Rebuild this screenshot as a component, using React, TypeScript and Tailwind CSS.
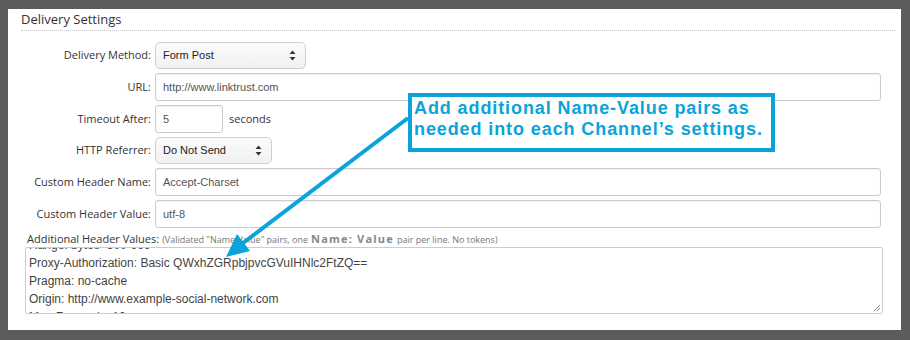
import React from 'react';

const labelFont = { fontFamily: '"Open Sans", "Liberation Sans", sans-serif' };
const inputFont = { fontFamily: '"Liberation Sans", Arial, sans-serif' };

const SelectArrows = () => (
  <svg width="7" height="11" viewBox="0 0 7 11" className="shrink-0">
    <path d="M3.5 0.5 L6.5 4 L0.5 4 Z" fill="#333" />
    <path d="M3.5 10.5 L6.5 7 L0.5 7 Z" fill="#333" />
  </svg>
);

const FakeSelect = ({ value, width }: { value: string; width: string }) => (
  <div
    className={`${width} h-[27px] flex items-center justify-between pl-[7px] pr-[9px] rounded-[5px] border border-[#cfcfcf] bg-gradient-to-b from-[#fbfbfb] to-[#f1f1f1] text-[11px] text-[#222]`}
    style={inputFont}
  >
    <span>{value}</span>
    <SelectArrows />
  </div>
);

const FakeInput = ({ value, width }: { value: string; width: string }) => (
  <div
    className={`${width} h-[28px] flex items-center px-[7px] rounded-[3px] border border-[#cccccc] bg-white shadow-[inset_0_1px_1px_rgba(0,0,0,0.06)] text-[11px] text-[#555]`}
    style={inputFont}
  >
    {value}
  </div>
);

const Row = ({ label, children }: { label: string; children: React.ReactNode }) => (
  <div className="flex items-center">
    <label className="w-[147px] text-right pr-[4px] text-[11px] text-[#333]" style={labelFont}>
      {label}
    </label>
    {children}
  </div>
);

const headerLines = [
  'Range: bytes=500-999',
  'Proxy-Authorization: Basic QWxhZGRpbjpvcGVuIHNlc2FtZQ==',
  'Pragma: no-cache',
  'Origin: http://www.example-social-network.com',
  'Max-Forwards: 10',
];

export default function App() {
  return (
    <div className="relative w-[910px] h-[340px] bg-[#5c5c5c] pt-[9px] pl-[8px] overflow-hidden">
      <div className="w-[893px] h-[321px] bg-white">
        <div className="px-[13px] pt-[1px]">
          <h3 className="text-[13px] leading-[19px] text-[#333] h-[20px]" style={labelFont}>
            Delivery Settings
          </h3>
          <div className="border-b border-dotted border-[#c8c8c8] w-[874px]" />
        </div>

        <div className="flex flex-col gap-[4px] mt-[11px]">
          <Row label="Delivery Method:">
            <FakeSelect value="Form Post" width="w-[151px]" />
          </Row>
          <Row label="URL:">
            <FakeInput value="http://www.linktrust.com" width="w-[726px]" />
          </Row>
          <Row label="Timeout After:">
            <FakeInput value="5" width="w-[68px]" />
            <span className="ml-[6px] text-[11px] text-[#333]" style={labelFont}>
              seconds
            </span>
          </Row>
          <Row label="HTTP Referrer:">
            <FakeSelect value="Do Not Send" width="w-[117px]" />
          </Row>
          <Row label="Custom Header Name:">
            <FakeInput value="Accept-Charset" width="w-[726px]" />
          </Row>
          <Row label="Custom Header Value:">
            <FakeInput value="utf-8" width="w-[726px]" />
          </Row>
        </div>

        <div className="pl-[19px] mt-[3px]" style={labelFont}>
          <div className="flex items-baseline h-[16px] leading-[16px] whitespace-nowrap">
            <span className="text-[11px] text-[#333]">Additional Header Values:</span>
            <span className="ml-[3px] text-[9px] text-[#777]">(Validated "Name:Value" pairs, one</span>
            <span className="mx-[3px] text-[11px] font-bold tracking-[1.2px] text-[#888]">Name: Value</span>
            <span className="text-[9px] text-[#777]">pair per line. No tokens)</span>
          </div>
          <div className="relative w-[858px] h-[67px] -ml-[2px] border border-[#cccccc] rounded-[2px] overflow-hidden bg-white">
            <div className="-mt-[12px] pl-[3px] text-[12px] leading-[18px] text-[#444]" style={inputFont}>
              {headerLines.map((line) => (
                <div key={line}>{line}</div>
              ))}
            </div>
            <svg width="9" height="9" viewBox="0 0 9 9" className="absolute right-[1px] bottom-[1px]">
              <path d="M8 2 L2 8 M8 5 L5 8" stroke="#888" strokeWidth="1" />
            </svg>
          </div>
        </div>
      </div>

      <svg width="910" height="340" className="absolute left-0 top-0 pointer-events-none">
        <line x1="408" y1="118" x2="243" y2="243" stroke="#0aa3da" strokeWidth="4" />
        <path d="M226 257 L250 251 L237 234 Z" fill="#0aa3da" />
      </svg>

      <div
        className="absolute left-[408px] top-[93px] w-[367px] h-[59px] border-[4px] border-[#0aa3da] bg-white pl-[2px] pt-[1px] text-[18px] leading-[21px] font-bold tracking-[0.9px] text-[#0aa3da] whitespace-nowrap"
        style={inputFont}
      >
        <div>Add additional Name-Value pairs as</div>
        <div>needed into each Channel’s settings.</div>
      </div>
    </div>
  );
}
